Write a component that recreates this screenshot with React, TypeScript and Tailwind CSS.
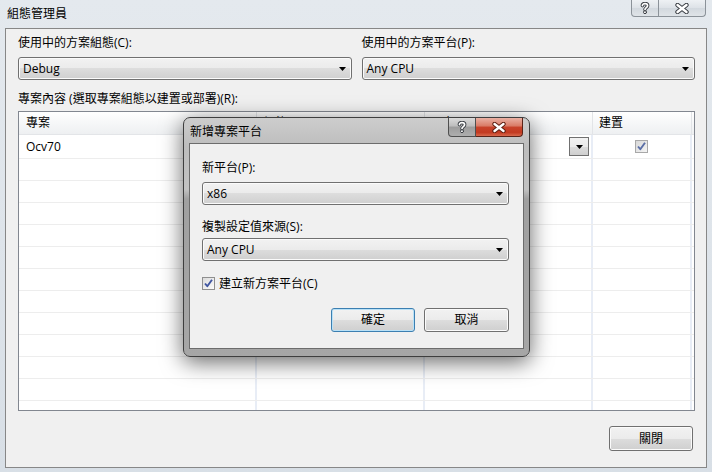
import React from 'react'

const FONT = "font-['Open_Sans','Noto_Sans_CJK_TC',sans-serif] text-[12px] leading-[16px] text-black"

function Arrow() {
  return (
    <svg width="7" height="4" viewBox="0 0 7 4">
      <path d="M0 0 H7 L3.5 4 Z" fill="#000" />
    </svg>
  )
}

function Combo({ value, className = '' }: { value: string; className?: string }) {
  return (
    <div
      className={`h-[23px] rounded-[3px] border border-[#707070] shadow-[inset_0_0_0_1px_#fbfbfb] bg-[linear-gradient(to_bottom,#f2f2f2_0%,#ebebeb_50%,#dddddd_50%,#cfcfcf_100%)] flex items-center justify-between pl-[4px] pr-[5px] ${className}`}
    >
      <span>{value}</span>
      <Arrow />
    </div>
  )
}

function Button({ label, isDefault = false, className = '' }: { label: string; isDefault?: boolean; className?: string }) {
  return (
    <div
      className={`rounded-[3px] border flex items-center justify-center bg-[linear-gradient(to_bottom,#f2f2f2_0%,#ebebeb_50%,#dddddd_50%,#cfcfcf_100%)] ${
        isDefault
          ? 'border-[#3c7fb1] shadow-[inset_0_0_0_1px_#b9e1f7]'
          : 'border-[#707070] shadow-[inset_0_0_0_1px_#fbfbfb]'
      } ${className}`}
    >
      {label}
    </div>
  )
}

function Check({ disabled = false }: { disabled?: boolean }) {
  return (
    <div
      className={`w-[13px] h-[13px] border flex items-center justify-center ${
        disabled
          ? 'border-[#a8a8a8] bg-[linear-gradient(135deg,#d8d8d8,#f4f4f4)]'
          : 'border-[#8f8f8f] bg-[linear-gradient(135deg,#dcdcdc,#fbfbfb)]'
      }`}
    >
      <svg width="11" height="11" viewBox="0 0 11 11">
        <path
          d="M2 5.5 L4.3 8.2 L9 1.8"
          fill="none"
          stroke={disabled ? '#5a6ea6' : '#3f55a0'}
          strokeWidth="1.9"
          strokeLinejoin="round"
        />
      </svg>
    </div>
  )
}

function QMark() {
  return (
    <svg width="12" height="12" viewBox="0 0 12 12">
      <g fill="none" strokeLinecap="round">
        <path d="M3.4 3.6 C3.4 0.9 8.6 0.9 8.6 3.7 C8.6 5.6 6 5.6 6 7.6" stroke="#3b3f45" strokeWidth="3.6" />
        <path d="M3.4 3.6 C3.4 0.9 8.6 0.9 8.6 3.7 C8.6 5.6 6 5.6 6 7.6" stroke="#fff" strokeWidth="1.7" />
        <circle cx="6" cy="10.2" r="1.5" fill="#fff" stroke="#3b3f45" strokeWidth="1" />
      </g>
    </svg>
  )
}

function XMark({ edge = '#3b3f45' }: { edge?: string }) {
  return (
    <svg width="14" height="11" viewBox="0 0 14 11">
      <g strokeLinecap="round">
        <path d="M2.5 2 L11.5 9 M11.5 2 L2.5 9" stroke={edge} strokeWidth="4.4" />
        <path d="M2.5 2 L11.5 9 M11.5 2 L2.5 9" stroke="#fff" strokeWidth="2.4" />
      </g>
    </svg>
  )
}

function Row({ first = false }: { first?: boolean }) {
  return (
    <div className={`flex border-b border-[#ededed] ${first ? 'h-[24px]' : 'h-[22px]'}`}>
      <div className="w-[238px] border-r-2 border-[#e8edf6] pl-[7px] flex items-center">{first ? 'Ocv70' : ''}</div>
      <div className="w-[168px] border-r-2 border-[#e8edf6] flex items-center justify-between pl-[5px] pr-[2px]">
        {first && (
          <>
            <span>Debug</span>
            <div className="w-[20px] h-[19px] border border-[#707070] bg-[linear-gradient(to_bottom,#f2f2f2_0%,#ebebeb_50%,#dddddd_50%,#cfcfcf_100%)] flex items-center justify-center">
              <Arrow />
            </div>
          </>
        )}
      </div>
      <div className="w-[168px] border-r-2 border-[#e8edf6] flex items-center justify-between pl-[5px] pr-[2px]">
        {first && (
          <>
            <span>Any CPU</span>
            <div className="w-[20px] h-[19px] border border-[#707070] bg-[linear-gradient(to_bottom,#f2f2f2_0%,#ebebeb_50%,#dddddd_50%,#cfcfcf_100%)] flex items-center justify-center">
              <Arrow />
            </div>
          </>
        )}
      </div>
      <div className="w-[99px] border-r-2 border-[#e8edf6] flex items-center justify-center">
        {first && <Check disabled />}
      </div>
      <div className="flex-1" />
    </div>
  )
}

export default function App() {
  return (
    <div className={`${FONT} relative w-[712px] h-[472px] overflow-hidden bg-[linear-gradient(to_bottom,#e4e9ee,#d8dfe6)]`}>
      {/* window title bar */}
      <div className="h-[28px] flex items-start justify-between">
        <div className="pl-[7px] pt-[6px]">組態管理員</div>
        <div className="flex mr-[6px]">
          <div className="w-[28px] h-[17px] border border-t-0 border-[#8b9299] rounded-bl-[4px] bg-[linear-gradient(to_bottom,#eef1f4,#dde2e7_50%,#d2d8de_51%,#dfe4e8)] flex items-center justify-center">
            <QMark />
          </div>
          <div className="w-[47px] h-[17px] border border-t-0 border-l-0 border-[#8b9299] rounded-br-[4px] bg-[linear-gradient(to_bottom,#eef1f4,#dde2e7_50%,#d2d8de_51%,#dfe4e8)] flex items-center justify-center">
            <XMark />
          </div>
        </div>
      </div>

      {/* client area */}
      <div className="ml-[5px] w-[702px] h-[440px] border border-[#878787] bg-[#f0f0f0] pl-[12px] pr-[11px] pt-[6px] flex flex-col">
        <div className="flex gap-[10px]">
          <div className="flex-1">
            <div>使用中的方案組態(C):</div>
            <Combo value="Debug" className="mt-[6px]" />
          </div>
          <div className="flex-1">
            <div>使用中的方案平台(P):</div>
            <Combo value="Any CPU" className="mt-[6px]" />
          </div>
        </div>

        <div className="mt-[11px]">專案內容 (選取專案組態以建置或部署)(R):</div>

        <div className="mt-[4px] h-[300px] border border-[#828790] bg-white overflow-hidden">
          <div className="flex h-[23px] bg-[linear-gradient(to_bottom,#ffffff,#f6f7f8_50%,#eef0f2)] border-b border-[#e3e5e8]">
            <div className="w-[238px] border-r border-[#e2e4e7] pl-[7px] flex items-center">專案</div>
            <div className="w-[168px] border-r border-[#e2e4e7] pl-[6px] flex items-center">組態</div>
            <div className="w-[168px] border-r border-[#e2e4e7] pl-[6px] flex items-center">平台</div>
            <div className="w-[99px] border-r border-[#e2e4e7] pl-[6px] flex items-center">建置</div>
            <div className="flex-1" />
          </div>
          <Row first />
          {Array.from({ length: 12 }).map((_, i) => (
            <Row key={i} />
          ))}
        </div>

        <Button label="關閉" className="mt-[15px] self-end mr-[2px] w-[84px] h-[25px]" />
      </div>

      {/* modal dialog */}
      <div className="absolute left-[183px] top-[117px] w-[347px] h-[240px] rounded-[7px] border border-[#3e3e3e] shadow-[0_5px_22px_rgba(0,0,0,0.6)] bg-[linear-gradient(to_bottom,#cdcdcd_0%,#bdbdbd_12%,#c2c2c2_30%,#a0a0a0_34%,#a6a6a6_100%)] flex flex-col">
        <div className="h-[25px] flex items-start justify-between">
          <div className="pl-[6px] pt-[6px]">新增專案平台</div>
          <div className="flex mr-[6px]">
            <div className="w-[28px] h-[19px] border border-t-0 border-[#4f4f4f] rounded-bl-[4px] bg-[linear-gradient(to_bottom,#dadada,#bdbdbd_45%,#9c9c9c_50%,#aeaeae)] flex items-center justify-center">
              <QMark />
            </div>
            <div className="w-[47px] h-[19px] border border-t-0 border-l-0 border-[#5a2318] rounded-br-[4px] bg-[linear-gradient(to_bottom,#eab1a4,#d97a65_45%,#c8432b_50%,#c33a21_80%,#d8694d)] flex items-center justify-center">
              <XMark edge="#5d1f12" />
            </div>
          </div>
        </div>
        <div className="mx-[5px] h-[206px] border border-[#6c6c6c] bg-[#f0f0f0] pl-[12px] pr-[14px] pt-[16px] flex flex-col">
          <div>新平台(P):</div>
          <Combo value="x86" className="mt-[6px]" />
          <div className="mt-[14px]">複製設定值來源(S):</div>
          <Combo value="Any CPU" className="mt-[3px]" />
          <div className="mt-[16px] flex items-center gap-[4px] h-[13px]">
            <Check />
            <span>建立新方案平台(C)</span>
          </div>
          <div className="mt-[18px] flex justify-end gap-[9px]">
            <Button label="確定" isDefault className="w-[84px] h-[24px]" />
            <Button label="取消" className="w-[85px] h-[24px]" />
          </div>
        </div>
      </div>
    </div>
  )
}
